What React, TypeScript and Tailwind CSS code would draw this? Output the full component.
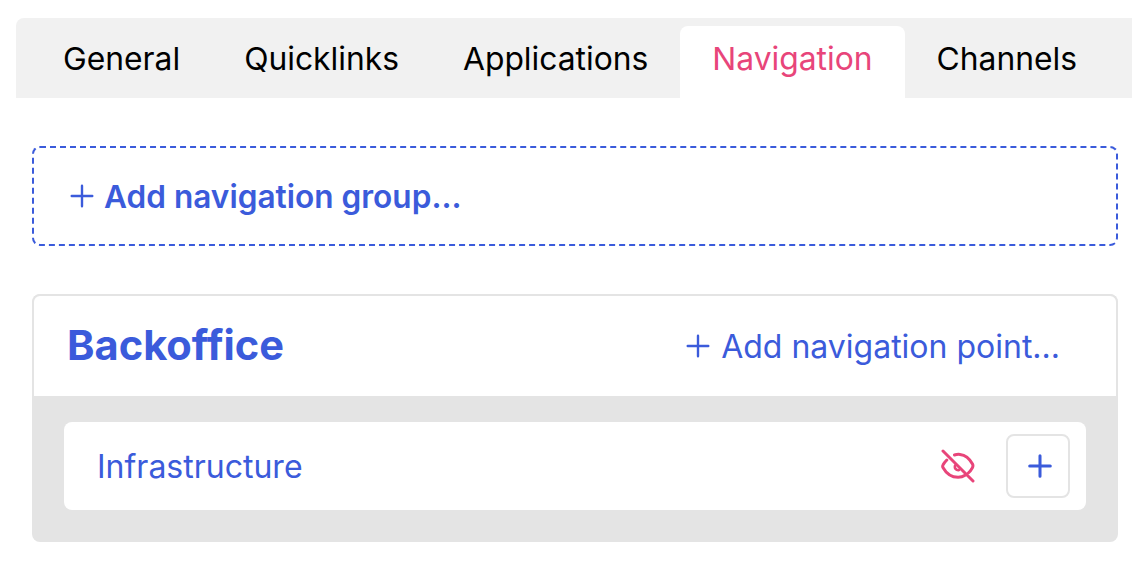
const tabs = ["General", "Quicklinks", "Applications", "Navigation", "Channels"];

const PlusIcon = ({ className }: { className: string }) => (
  <svg className={className} viewBox="0 0 24 24" fill="none" stroke="currentColor" strokeWidth="2.2" strokeLinecap="round">
    <path d="M12 2.500v19M2.500 12h19" />
  </svg>
);

const EyeOffIcon = () => (
  <svg className="w-[34px] h-[34px] text-[#e8457a]" viewBox="-1 -1 34 34" fill="none" stroke="currentColor" strokeWidth="3" strokeLinecap="round" strokeLinejoin="round">
    <path d="M1 1l30 30" />
    <path d="M12.500 5c1.800-.6 3.500-.8 5.500-.6 5 .5 9.500 4 12.500 9.600.6 1.200.6 2.500-.1 3.700-1 1.800-2.400 3.800-4.100 5.300" />
    <path d="M4.800 10c-1.500 1.500-2.900 3.300-3.700 4.800-.6 1-.6 2 0 3 3 5.400 8.500 9.500 15 9.500 2.500 0 5-.7 7-2.100" />
    <path d="M13 15.500c-.5 1.800.2 3.500 1.800 4.300.8.400 1.500.4 2.200.2" strokeWidth="2.500" />
  </svg>
);

export default function App() {
  return (
    <div className="w-[1132px] h-[564px] overflow-hidden bg-white pl-4 pt-[18px] font-['Inter',sans-serif]">
      <div className="flex h-20 items-end rounded-tl-lg bg-[#f1f1f1] pl-[15px]">
        {tabs.map((tab) => (
          <div
            key={tab}
            className={
              tab === "Navigation"
                ? "flex h-[72px] items-center rounded-t-lg bg-white px-8 pb-[6px] text-[31.8px] text-[#e8457a]"
                : "flex h-[72px] items-center px-8 pb-[6px] text-[31.8px] text-black"
            }
          >
            {tab}
          </div>
        ))}
      </div>

      <div className="mt-12 ml-4 mr-[14px]">
        <div className="flex h-[100px] items-center gap-[9px] rounded-lg border-2 border-dashed border-[#3b5bdb] pl-[35px] text-[#3b5bdb]">
          <PlusIcon className="h-[26px] w-[26px]" />
          <span className="pt-[2px] text-[31.6px] font-semibold">Add navigation group...</span>
        </div>

        <div className="mt-12 overflow-hidden rounded-lg bg-[#e4e4e4]">
          <div className="flex h-[102px] items-center justify-between rounded-t-lg border-2 border-b-0 border-[#e4e4e4] bg-white pl-[33px] pr-[56px] text-[#3b5bdb]">
            <h2 className="pb-[2px] text-[41.6px] font-bold">Backoffice</h2>
            <div className="flex items-center gap-[10px] text-[32px]">
              <PlusIcon className="h-[26px] w-[26px]" />
              <span className="pt-[2px]">Add navigation point...</span>
            </div>
          </div>
          <div className="px-8 pt-[26px] pb-8">
            <div className="flex h-[88px] items-center rounded-lg bg-white pl-[33px] pr-4 text-[#3b5bdb]">
              <span className="flex-1 pt-[2px] text-[32px]">Infrastructure</span>
              <EyeOffIcon />
              <button className="ml-[31px] flex h-16 w-16 items-center justify-center rounded-lg border-2 border-[#e4e4e4] pl-1">
                <PlusIcon className="h-[26px] w-[26px] stroke-[2.8]" />
              </button>
            </div>
          </div>
        </div>
      </div>
    </div>
  );
}
